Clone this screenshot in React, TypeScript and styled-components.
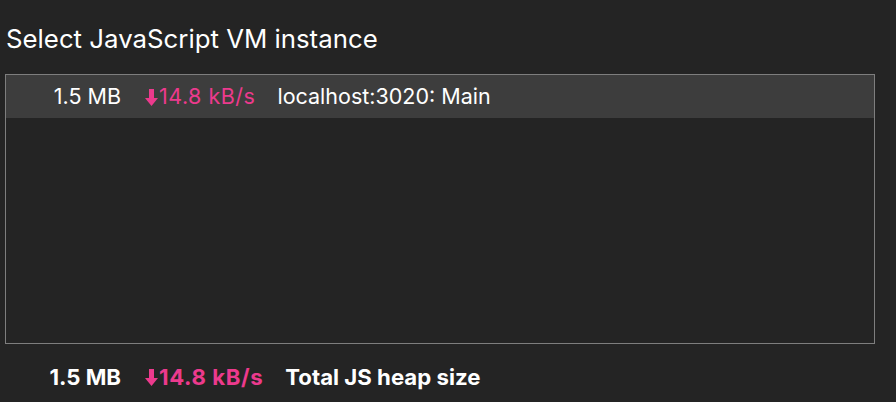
import React from "react";
import styled, { createGlobalStyle } from "styled-components";

const Global = createGlobalStyle`
  html, body { margin: 0; padding: 0; background: #242424; }
  body { font-family: Inter, "Noto Sans", sans-serif; color: #ffffff; }
`;

const Page = styled.div`
  width: 896px;
  height: 402px;
  box-sizing: border-box;
  padding: 24px 21px 0 5px;
  background: #242424;
  overflow: hidden;
`;

const Title = styled.h1`
  margin: 0 0 20px 1px;
  font-size: 25.8px;
  line-height: 30px;
  font-weight: 400;
  color: #ffffff;
`;

const ListBox = styled.div`
  height: 270px;
  box-sizing: border-box;
  border: 1px solid #7e7e7e;
  display: flex;
  flex-direction: column;
`;

const Line = styled.div<{ $selected?: boolean; $bold?: boolean }>`
  display: flex;
  align-items: center;
  height: 43px;
  font-size: ${(p) => (p.$bold ? "22.2px" : "21.5px")};
  line-height: 43px;
  font-weight: ${(p) => (p.$bold ? 700 : 400)};
  background: ${(p) => (p.$selected ? "#3d3d3d" : "transparent")};
  white-space: nowrap;
`;

const Footer = styled.div`
  margin-top: 11px;
  padding-left: 1px;
`;

const Size = styled.span`
  width: 115px;
  text-align: right;
  flex: none;
`;

const Rate = styled.span<{ $bold?: boolean }>`
  display: inline-flex;
  align-items: center;
  margin-left: 24px;
  color: #ec3a8d;
  letter-spacing: ${(p) => (p.$bold ? "0.6px" : "0.5px")};
`;

const Name = styled.span`
  margin-left: 22px;
`;

const ArrowIcon = styled.svg`
  width: 13px;
  height: 17px;
  margin-right: 1px;
  margin-top: 1px;
  flex: none;
`;

const DownArrow = () => (
  <ArrowIcon viewBox="0 0 13 17">
    <path d="M4 0 H9 V9 H13 L6.5 17 L0 9 H4 Z" fill="#ec3a8d" />
  </ArrowIcon>
);

type Entry = { size: string; rate: string; name: string };

const Row = ({ e, selected, bold }: { e: Entry; selected?: boolean; bold?: boolean }) => (
  <Line $selected={selected} $bold={bold}>
    <Size>{e.size}</Size>
    <Rate $bold={bold}>
      <DownArrow />
      {e.rate}
    </Rate>
    <Name>{e.name}</Name>
  </Line>
);

export default function App() {
  return (
    <>
      <Global />
      <Page>
        <Title>Select JavaScript VM instance</Title>
        <ListBox>
          <Row e={{ size: "1.5 MB", rate: "14.8 kB/s", name: "localhost:3020: Main" }} selected />
        </ListBox>
        <Footer>
          <Row e={{ size: "1.5 MB", rate: "14.8 kB/s", name: "Total JS heap size" }} bold />
        </Footer>
      </Page>
    </>
  );
}
